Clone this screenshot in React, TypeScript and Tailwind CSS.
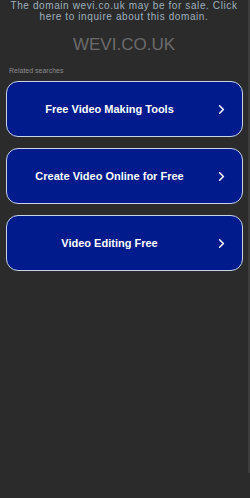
import { ChevronRight } from "lucide-react";

const searches = [
  "Free Video Making Tools",
  "Create Video Online for Free",
  "Video Editing Free",
];

const App = () => {
  return (
    <div className="flex min-h-[498px] bg-[#2b2b2b] font-['Liberation_Sans',Arial,sans-serif]">
      <div className="flex-1">
        <p className="px-1 text-center text-[10px] leading-[11px] tracking-[0.6px] text-[#9fb0bc]">
          The domain wevi.co.uk may be for sale. Click here to inquire about
          this domain.
        </p>
        <h1 className="mt-[13px] text-center text-[17px] leading-[20px] text-[#6b6b6b]">
          WEVI.CO.UK
        </h1>
        <p className="mt-[12px] pl-[9px] text-[7px] leading-[8px] text-[#8c8c8c]">
          Related searches
        </p>
        <div className="mt-[6px] ml-[6px] mr-[5px] flex flex-col gap-[11px]">
          {searches.map((s) => (
            <div
              key={s}
              className="flex h-[56px] items-center rounded-[12px] border-[1.5px] border-[#c9d2e6] bg-[#011b8c] text-white"
            >
              <span className="flex-1 pl-[18px] text-center text-[11px] font-bold">
                {s}
              </span>
              <ChevronRight className="mr-[13px] ml-[20px] h-[15px] w-[15px]" strokeWidth={2.5} />
            </div>
          ))}
        </div>
      </div>
      <div className="h-[473px] w-[2px] bg-[#3d3d3d]" />
    </div>
  );
};

export default App;
